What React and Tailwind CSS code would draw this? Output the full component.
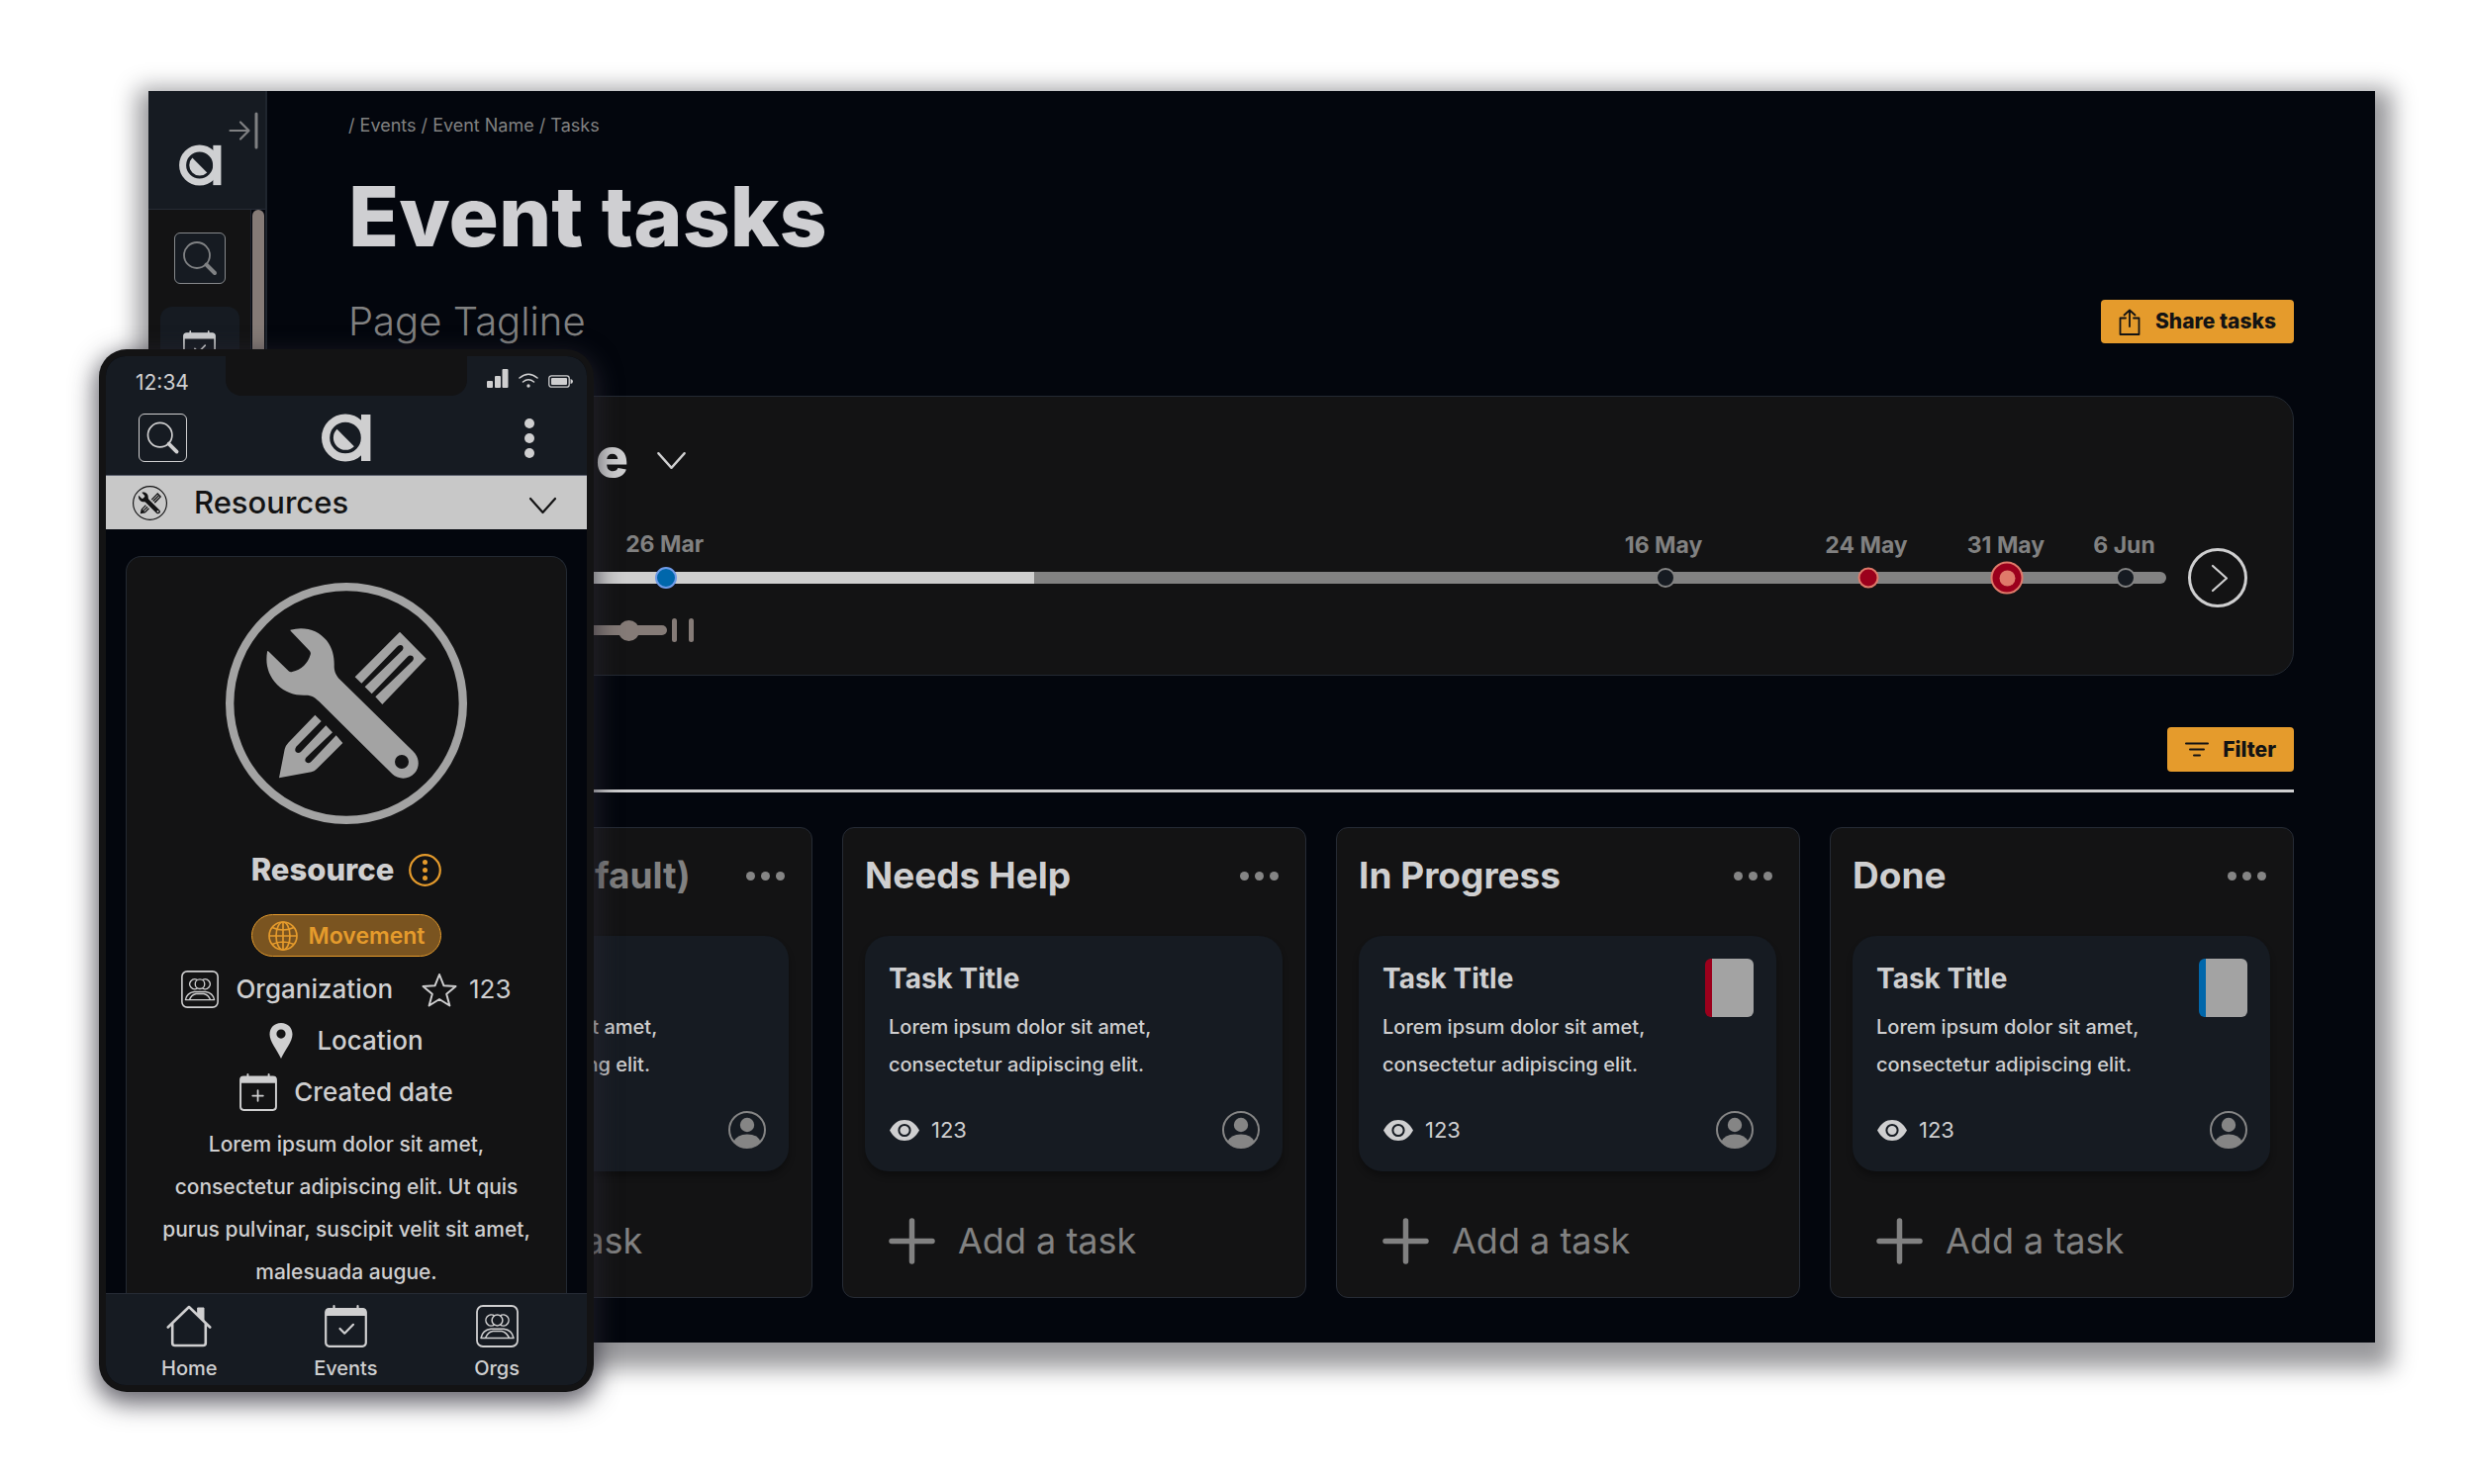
import React from "react";

function LogoMark({ className }) {
  return (
    <svg viewBox="0 0 50 49" className={className} fill="currentColor" aria-hidden="true">
      <circle cx="24" cy="24.5" r="19.9" fill="none" stroke="currentColor" strokeWidth="8.2" />
      <rect x="40" y="1" width="9.4" height="47" />
      <path d="M15.5 15.8A12.3 12.3 0 0 0 32.9 33.2Z" />
    </svg>
  );
}

function SearchGlyph({ className }) {
  return (
    <svg viewBox="0 0 50 50" className={className} fill="none" stroke="currentColor" strokeLinecap="round" aria-hidden="true">
      <circle cx="22" cy="22" r="13" strokeWidth="1.8" />
      <path d="M31.5 31.5L40 40" strokeWidth="4" />
    </svg>
  );
}

function CalendarIcon({ className, mark }) {
  return (
    <svg viewBox="0 0 43 43" className={className} fill="none" stroke="currentColor" strokeLinecap="round" strokeLinejoin="round" aria-hidden="true">
      <rect x="1.2" y="4" width="40.6" height="37.8" rx="3.5" strokeWidth="2.2" />
      <path d="M1 11V6.5Q1 3.5 4 3.5H39Q42 3.5 42 6.5V11Z" fill="currentColor" stroke="none" />
      <path d="M9.5 4V1.2M33.5 4V1.2" strokeWidth="2.2" />
      {mark === "plus" ? (
        <path d="M21 19.5V31.5M15 25.5H27" strokeWidth="2" />
      ) : (
        <path d="M15.5 24L20.2 28.7L29 19.8" strokeWidth="2.2" />
      )}
    </svg>
  );
}

function PeopleIcon({ className }) {
  return (
    <svg viewBox="0 0 43 43" className={className} fill="none" stroke="currentColor" strokeLinejoin="round" aria-hidden="true">
      <rect x="1" y="1" width="41" height="41" rx="6" strokeWidth="1.8" />
      <g strokeWidth="1.5">
        <circle cx="21.5" cy="15.5" r="5.4" />
        <path d="M18.6 10.8A5.6 5.6 0 1 0 18.6 20.2M24.4 10.8A5.6 5.6 0 1 1 24.4 20.2" />
        <path d="M5 33.5Q6.5 25.5 15 24.3H28Q36.5 25.5 38 33.5Z" />
        <path d="M9.5 33.5Q12 27.5 17 26.6H26Q31 27.5 33.5 33.5" />
      </g>
    </svg>
  );
}

function HomeIcon({ className }) {
  return (
    <svg viewBox="0 0 46 43" className={className} fill="none" stroke="currentColor" strokeWidth="2.6" strokeLinecap="round" strokeLinejoin="round" aria-hidden="true">
      <path d="M1.8 22.5L23 2L44.2 22.5M6.2 19V38.5Q6.2 41 8.7 41H37.3Q39.8 41 39.8 38.5V19" />
      <path d="M32 3H38V16L32 10.5Z" fill="currentColor" strokeWidth="1" />
    </svg>
  );
}

function ToolsIcon({ className, ring }) {
  return (
    <svg viewBox="24 27 732 732" className={className} fill="currentColor" aria-hidden="true">
      <circle cx="390" cy="393" r={366 - ring / 2} fill="none" stroke="currentColor" strokeWidth={ring} />
      <path
        fillRule="evenodd"
        d="M220 170C262 158 305 170 330 202C350 228 354 256 353 282C354 300 360 310 371 321L592 538C612 557 613 585 598 603C580 625 549 625 529 607L308 388C296 376 286 368 266 368C235 369 205 361 180 336C152 306 144 272 150 237Q151 232 155 236L215 295Q220 299 226 297C254 290 273 272 281 245Q283 239 279 234L221 173ZM558 549a21 21 0 1 0 0 42a21 21 0 1 0 0-42Z"
      />
      <path d="M552 176L632 257L499 396L478 373L591 264Q597 255 590 249Q582 245 575 252L467 364L446 343L560 232Q566 223 558 217Q550 214 543 222L436 332L416 313Z" />
      <path d="M295 428L314 447L238 524Q232 534 237 540Q244 546 252 540L328 460L348 481L268 557Q262 565 268 571Q275 577 283 570L359 490L379 513L300 592Q293 599 284 601L186 619L203 532Q206 520 214 512Z" />
    </svg>
  );
}

function Chevron({ className, d = "M2 2L14.5 16L27 2", box = "0 0 29 18" }) {
  return (
    <svg viewBox={box} className={className} fill="none" stroke="currentColor" strokeWidth="2.2" strokeLinecap="round" strokeLinejoin="round" aria-hidden="true">
      <path d={d} />
    </svg>
  );
}

function EyeIcon() {
  return (
    <svg viewBox="0 0 30 21" className="w-[30px] h-[21px]" aria-hidden="true">
      <path d="M0 10.5C4 3 9 0 15 0S26 3 30 10.5C26 18 21 21 15 21S4 18 0 10.5Z" fill="currentColor" />
      <circle cx="15" cy="10.5" r="5.6" fill="none" stroke="#161b22" strokeWidth="2" />
    </svg>
  );
}

function Avatar() {
  return (
    <svg viewBox="0 0 38 38" className="w-[38px] h-[38px] text-[#858585]" fill="currentColor" role="img" aria-label="Assignee">
      <circle cx="19" cy="19" r="18" fill="none" stroke="currentColor" strokeWidth="2" />
      <circle cx="19" cy="14" r="7.2" />
      <path d="M5.5 31Q8.5 23.5 19 23.5T32.5 31A18.5 18.5 0 0 1 5.5 31Z" />
    </svg>
  );
}

function Sidebar() {
  return (
    <nav className="w-[120px] shrink-0 flex flex-col border-r-2 border-[#1f252e] bg-[#131314]">
      <div className="h-[120px] shrink-0 flex items-start gap-[7px] pl-[31px] pt-[21px] bg-[#161b22] border-b border-[#262b35]">
        <LogoMark className="w-[43px] h-[42px] mt-[33px] text-[#cfd0d2]" />
        <button type="button" aria-label="Expand menu" className="text-[#7f8082]">
          <svg viewBox="0 0 30 38" className="w-[30px] h-[38px]" fill="none" stroke="currentColor" strokeWidth="2.2" strokeLinecap="round" strokeLinejoin="round">
            <path d="M1.5 19H20M12 10.5L20.5 19L12 27.5" />
            <path d="M28 2V36" strokeWidth="3" />
          </svg>
        </button>
      </div>
      <div className="flex-1 flex">
        <div className="flex-1 flex flex-col items-center pt-[23px] gap-[23px] border-r border-[#1f2430]">
          <button type="button" aria-label="Search" className="w-[52px] h-[52px] rounded-md border border-[#85888b] bg-[#161b22] text-[#808284]">
            <SearchGlyph className="w-full h-full" />
          </button>
          <a href="#events" aria-label="Events" className="w-[80px] h-[80px] rounded-xl bg-[#161b22] flex items-center justify-center text-[#cfd0d2]">
            <CalendarIcon className="w-[33px] h-[33px]" />
          </a>
        </div>
        <div className="w-[14px] bg-[#03060d] px-px pb-[200px] flex">
          <div className="flex-1 rounded-full bg-[#857b77]" />
        </div>
      </div>
    </nav>
  );
}

const milestones = [
  { label: "26 Mar", at: 11.25, dot: "w-[22px] h-[22px] border-2 border-[#6f9be8] bg-[#0067ab]" },
  { label: "16 May", at: 70.35, dot: "w-[20px] h-[20px] border-2 border-[#838383] bg-[#161b22]" },
  { label: "24 May", at: 82.35, dot: "w-[21px] h-[21px] border-2 border-[#df7a6a] bg-[#9b001c]" },
  { label: "31 May", at: 90.6, dot: "w-[33px] h-[33px] border-2 border-[#df7a6a] bg-[#9b001c]", core: true },
  { label: "6 Jun", at: 97.6, dot: "w-[20px] h-[20px] border-2 border-[#838383] bg-[#161b22]" },
];

function Timeline() {
  return (
    <section className="mt-[53px] rounded-[24px] border border-[#232932] bg-[#131314] px-[46px] pt-[29px] pb-[33px]">
      <button type="button" className="flex items-center gap-[28px] text-[#cfcfd0]">
        <h2 className="text-[55px] leading-[64px] font-extrabold">Timeline</h2>
        <Chevron className="w-[31px] h-[19px] mt-1.5" />
      </button>
      <div className="mt-[60px] flex items-center gap-[22px]">
        <button type="button" aria-label="Earlier" className="w-[60px] h-[60px] shrink-0 rounded-full border-[3px] border-[#cfcfd0] text-[#cfcfd0] flex items-center justify-center pr-1">
          <Chevron box="0 0 18 29" d="M16 2L2 14.5L16 27" className="w-[18px] h-[29px]" />
        </button>
        <div className="relative flex-1 h-3 rounded-full bg-[#828282]">
          <div className="h-full w-[33%] rounded-l-full bg-[#cfcfcf]" />
          {milestones.map((m) => (
            <div key={m.label} className="absolute top-1/2 -translate-x-1/2 -translate-y-1/2" style={{ left: m.at + "%" }}>
              <span
                className={
                  "absolute bottom-full left-1/2 -translate-x-1/2 pr-[3px] whitespace-nowrap text-[23px] leading-[24px] font-bold text-[#818181] " +
                  (m.core ? "pb-[5px]" : "pb-[11px]")
                }
              >
                {m.label}
              </span>
              <div className={"rounded-full flex items-center justify-center " + m.dot}>
                {m.core ? <span className="w-4 h-4 rounded-full bg-[#df7a6a]" /> : null}
              </div>
            </div>
          ))}
        </div>
        <button type="button" aria-label="Later" className="w-[60px] h-[60px] shrink-0 rounded-full border-[3px] border-[#cfcfd0] text-[#cfcfd0] flex items-center justify-center pl-1">
          <Chevron box="0 0 18 29" d="M2 2L16 14.5L2 27" className="w-[18px] h-[29px]" />
        </button>
      </div>
      <div className="mt-[11px] h-6 flex items-center gap-[5px] pl-[41px]">
        <input
          type="range"
          aria-label="Timeline zoom"
          defaultValue={87}
          className="w-[234px] h-[10px] appearance-none rounded-full bg-[#857b77] [&::-webkit-slider-thumb]:appearance-none [&::-webkit-slider-thumb]:w-[21px] [&::-webkit-slider-thumb]:h-[21px] [&::-webkit-slider-thumb]:rounded-full [&::-webkit-slider-thumb]:bg-[#857b77]"
        />
        <div className="flex gap-3">
          <span className="w-[5px] h-6 rounded-full bg-[#857b77]" />
          <span className="w-[5px] h-6 rounded-full bg-[#857b77]" />
        </div>
      </div>
    </section>
  );
}

function TaskCard({ stripe }) {
  return (
    <article className="rounded-[24px] bg-[#161b22] p-[23px] shadow-[0_5px_6px_rgba(0,0,0,0.3)]">
      <div className="flex justify-between items-start">
        <div className="pl-px">
          <h4 className="text-[28px] leading-[40px] font-bold">Task Title</h4>
          <p className="mt-[10px] text-[20px] leading-[38px] font-medium whitespace-nowrap">
            Lorem ipsum dolor sit amet,
            <br />
            consectetur adipiscing elit.
          </p>
        </div>
        {stripe ? <div className={"w-[49px] h-[59px] shrink-0 -ml-10 rounded-md border-l-[7px] bg-[#a3a3a3] " + stripe} /> : null}
      </div>
      <div className="mt-[28px] flex items-center justify-between">
        <div className="flex items-center gap-3 pl-0.5 text-[22px] leading-[38px]">
          <EyeIcon />
          <span>123</span>
        </div>
        <Avatar />
      </div>
    </article>
  );
}

function Column({ title, muted, stripe }) {
  return (
    <section className="min-w-0 rounded-xl border border-[#262b35] bg-[#131314] pl-[22px] pr-[23px] pt-[24px] pb-[33px] text-[#cfcfd0]">
      <div className="flex items-center justify-between pr-1">
        <h3 className={"text-[37px] leading-[48px] font-bold whitespace-nowrap " + (muted ? "text-[#818181]" : "")}>{title}</h3>
        <button type="button" aria-label={title + " options"} className="flex gap-[6px] text-[#858585]">
          <span className="w-[9px] h-[9px] rounded-full bg-current" />
          <span className="w-[9px] h-[9px] rounded-full bg-current" />
          <span className="w-[9px] h-[9px] rounded-full bg-current" />
        </button>
      </div>
      <div className="mt-[37px]">
        <TaskCard stripe={stripe} />
      </div>
      <button type="button" className="mt-[47px] ml-6 flex items-center gap-[23px] text-[#818181]">
        <svg viewBox="0 0 47 47" className="w-[47px] h-[47px]" stroke="currentColor" strokeWidth="5.5" strokeLinecap="round" aria-hidden="true">
          <path d="M23.5 3V44M3 23.5H44" />
        </svg>
        <span className="text-[36px] leading-[47px] font-normal">Add a task</span>
      </button>
    </section>
  );
}

function Desktop() {
  return (
    <div className="mt-[92px] ml-[150px] mr-[100px] flex bg-[#03060d] shadow-[3px_12px_22px_14px_rgba(12,12,18,0.42)]">
      <Sidebar />
      <main className="flex-1 min-w-0 px-[82px] pt-[23px] pb-[45px]">
        <nav aria-label="Breadcrumb" className="text-[18px] leading-6 text-[#818181] whitespace-pre">
          / <a href="#events">Events</a> / <a href="#event">Event Name</a> / <a href="#tasks">Tasks</a>
        </nav>
        <h1 className="mt-[40px] text-[84px] leading-[80px] font-extrabold text-[#cfcfd2]">Event tasks</h1>
        <div className="mt-[44px] h-11 flex items-center justify-between">
          <p className="text-[40px] leading-[44px] font-light text-[#818181]">Page Tagline</p>
          <button type="button" className="h-11 px-[18px] flex items-center gap-[15px] rounded bg-[#e59b2c] text-[#131314] text-[21px] leading-6 font-extrabold">
            <svg viewBox="0 0 22 27" className="w-[22px] h-[27px]" fill="none" stroke="currentColor" strokeWidth="1.8" strokeLinecap="round" strokeLinejoin="round" aria-hidden="true">
              <path d="M7 9.5H1.5V26H20.5V9.5H15M11 18V1.5M5.5 6.5L11 1.5L16.5 6.5" />
            </svg>
            Share tasks
          </button>
        </div>
        <Timeline />
        <div className="mt-[52px] pb-[18px] flex justify-end border-b-[3px] border-[#cfcfd0]">
          <button type="button" className="h-[45px] px-[18px] flex items-center gap-[14px] rounded bg-[#e59b2c] text-[#131314] text-[21px] leading-6 font-extrabold">
            <svg viewBox="0 0 24 15" className="w-[24px] h-[15px]" stroke="currentColor" strokeWidth="2" strokeLinecap="round" aria-hidden="true">
              <path d="M1 1.5H23M5 7.5H19M9 13.5H15" />
            </svg>
            Filter
          </button>
        </div>
        <div className="mt-[35px] grid grid-cols-4 gap-[30px]">
          <Column title="All tasks (Default)" muted />
          <Column title="Needs Help" />
          <Column title="In Progress" stripe="border-[#9b001c]" />
          <Column title="Done" stripe="border-[#0067ab]" />
        </div>
      </main>
    </div>
  );
}

function Phone() {
  return (
    <div className="absolute left-[100px] top-[353px] w-[500px] rounded-[28px] bg-[#131314] p-[7px] text-[#cfcfd0] shadow-[0_8px_24px_4px_rgba(40,38,50,0.7)]">
      <div className="rounded-[20px] overflow-hidden bg-[#03060d]">
        <header className="bg-[#161b22] pb-[13px] border-b border-[#5d6270]">
          <div className="flex justify-between h-10">
            <span className="w-[121px] pl-[30px] pt-[15px] text-[21px] leading-6">12:34</span>
            <div className="w-[244px] rounded-b-2xl bg-[#131314]" />
            <div className="w-[121px] flex items-end gap-[10px] pl-[20px] pb-[8px]">
              <svg viewBox="0 0 22 19" className="w-[22px] h-[19px]" fill="currentColor" aria-hidden="true">
                <rect x="0" y="12" width="6" height="7" rx="1" />
                <rect x="8" y="7" width="6" height="12" rx="1" />
                <rect x="15.5" y="0" width="6" height="19" rx="1" />
              </svg>
              <svg viewBox="0 0 20 15" className="w-[20px] h-[15px]" fill="none" stroke="currentColor" strokeWidth="1.6" strokeLinecap="round" aria-hidden="true">
                <path d="M1 5Q10-2.5 19 5M4.5 9Q10 4.5 15.5 9" />
                <circle cx="10" cy="13" r="1.7" fill="currentColor" stroke="none" />
              </svg>
              <svg viewBox="0 0 25 13" className="w-[25px] h-[13px]" aria-hidden="true">
                <rect x="0.8" y="0.8" width="20.4" height="11.4" rx="2.5" fill="none" stroke="currentColor" strokeWidth="1.3" />
                <rect x="3" y="3" width="16" height="7" rx="1" fill="currentColor" />
                <path d="M22.5 4V9Q25 8.5 25 6.5T22.5 4Z" fill="currentColor" />
              </svg>
            </div>
          </div>
          <div className="mt-[18px] grid grid-cols-[1fr_auto_1fr] items-center">
            <div className="pl-[33px]">
              <button type="button" aria-label="Search" className="block w-[49px] h-[49px] rounded-md border border-current">
                <SearchGlyph className="w-full h-full" />
              </button>
            </div>
            <LogoMark className="w-[50px] h-[49px]" />
            <div className="flex justify-end pr-[53px]">
              <button type="button" aria-label="Menu" className="w-[10px] flex flex-col gap-[5px]">
                <span className="w-[10px] h-[10px] rounded-full bg-current" />
                <span className="w-[10px] h-[10px] rounded-full bg-current" />
                <span className="w-[10px] h-[10px] rounded-full bg-current" />
              </button>
            </div>
          </div>
        </header>
        <button type="button" className="w-full h-[54px] pl-[27px] pr-[30px] flex items-center bg-[#c8c8c8] text-[#131314]">
          <ToolsIcon ring={24} className="w-[35px] h-[35px]" />
          <span className="ml-[27px] text-[31px] leading-9 font-medium">Resources</span>
          <Chevron className="ml-auto mt-1.5 w-[29px] h-[18px]" />
        </button>
        <main className="px-[20px] pt-[27px]">
          <article className="rounded-t-2xl border border-b-0 border-[#232932] bg-[#131314] pt-[26px] flex flex-col items-center">
            <ToolsIcon ring={25} className="w-[244px] h-[244px] text-[#a3a3a3]" />
            <div className="mt-[29px] h-[34px] flex items-center gap-[15px]">
              <h2 className="text-[31px] leading-[34px] font-extrabold">Resource</h2>
              <button type="button" aria-label="Resource options" className="text-[#e59b2c]">
                <svg viewBox="0 0 33 33" className="w-[33px] h-[33px]" fill="currentColor">
                  <circle cx="16.5" cy="16.5" r="15.3" fill="none" stroke="currentColor" strokeWidth="2.2" />
                  <circle cx="16.5" cy="8.5" r="2.5" />
                  <circle cx="16.5" cy="16.5" r="2.5" />
                  <circle cx="16.5" cy="24.5" r="2.5" />
                </svg>
              </button>
            </div>
            <div className="mt-[28px] h-[43px] px-[16px] flex items-center gap-[11px] rounded-full border border-[#e59b2c] bg-[#7a5420] text-[#e59b2c]">
              <svg viewBox="0 0 30 30" className="w-[30px] h-[30px]" fill="none" stroke="currentColor" strokeWidth="1.7" aria-hidden="true">
                <circle cx="15" cy="15" r="14" />
                <ellipse cx="15" cy="15" rx="7" ry="14" />
                <path d="M15 1V29M1 15H29M4 6.5Q15 11.5 26 6.5M4 23.5Q15 18.5 26 23.5" />
              </svg>
              <span className="text-[23px] leading-6 font-semibold">Movement</span>
            </div>
            <div className="mt-[14px] h-[38px] flex items-center text-[26px] leading-[38px] font-medium">
              <PeopleIcon className="w-[38px] h-[38px]" />
              <span className="ml-[17px]">Organization</span>
              <svg viewBox="0 0 36 35" className="w-[36px] h-[35px] ml-[29px]" fill="none" stroke="currentColor" strokeWidth="2" strokeLinejoin="round" aria-hidden="true">
                <path d="M18 2L22.5 13.3L34.5 14L25.2 21.7L28.4 33.5L18 27L7.6 33.5L10.8 21.7L1.5 14L13.5 13.3Z" />
              </svg>
              <span className="ml-[12px] font-normal">123</span>
            </div>
            <div className="mt-[14px] h-[38px] flex items-center gap-[24px] text-[26px] leading-[38px] font-medium">
              <svg viewBox="0 0 24 36" className="w-[24px] h-[36px]" fill="currentColor" aria-hidden="true">
                <path fillRule="evenodd" d="M12 0C5 0 0.5 5 0.5 11.5C0.5 19 8 27 12 36C16 27 23.5 19 23.5 11.5C23.5 5 19 0 12 0ZM12 6.5a4.6 4.6 0 1 1 0 9.2a4.6 4.6 0 1 1 0-9.2Z" />
              </svg>
              Location
            </div>
            <div className="mt-[14px] h-[38px] flex items-center gap-[17px] text-[26px] leading-[38px] font-medium">
              <CalendarIcon mark="plus" className="w-[38px] h-[38px]" />
              Created date
            </div>
            <p className="mt-[12px] text-[21px] leading-[43px] text-center whitespace-nowrap font-medium">
              Lorem ipsum dolor sit amet,
              <br />
              consectetur adipiscing elit. Ut quis
              <br />
              purus pulvinar, suscipit velit sit amet,
              <br />
              malesuada augue.
            </p>
          </article>
        </main>
        <nav className="flex items-start justify-between bg-[#161b22] border-t border-[#262b35] pl-[56px] pr-[68px] pt-[11px] pb-[5px] text-[20px] leading-6 font-medium">
          <a href="#home" className="flex flex-col items-center gap-[9px]">
            <HomeIcon className="w-[46px] h-[43px]" />
            Home
          </a>
          <a href="#events" className="flex flex-col items-center gap-[9px]">
            <CalendarIcon className="w-[43px] h-[43px]" />
            Events
          </a>
          <a href="#orgs" className="flex flex-col items-center gap-[9px]">
            <PeopleIcon className="w-[43px] h-[43px]" />
            Orgs
          </a>
        </nav>
      </div>
    </div>
  );
}

export default function App() {
  return (
    <div className="relative min-h-screen flow-root bg-white font-['Inter',sans-serif]">
      <Desktop />
      <Phone />
    </div>
  );
}
